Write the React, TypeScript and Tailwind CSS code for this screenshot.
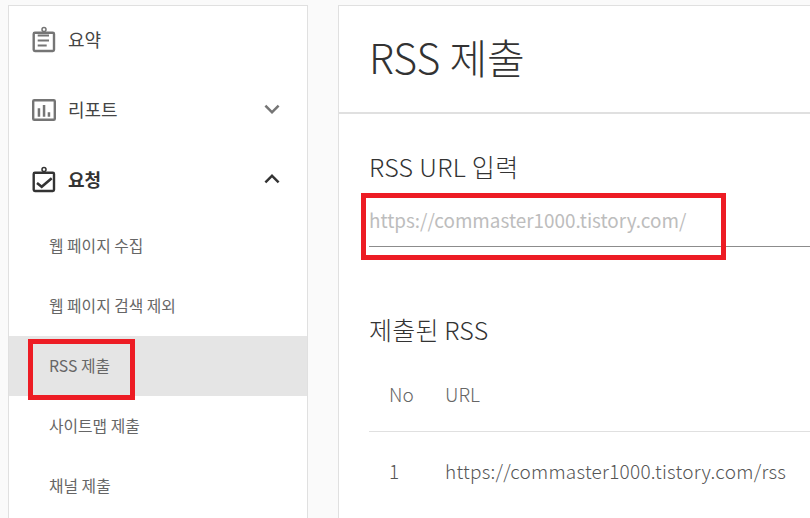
const font = "font-['Noto_Sans_CJK_KR','Noto_Sans',sans-serif]";

function Clip({ children, color }: { children: React.ReactNode; color: string }) {
  return (
    <svg width="30" height="30" viewBox="0 0 30 30" fill="none" stroke={color} className="shrink-0">
      <circle cx="15" cy="5.600" r="2" strokeWidth="1.500" />
      <rect x="4.700" y="8.700" width="20.300" height="18.300" rx="1.200" strokeWidth="2.400" />
      {children}
    </svg>
  );
}

function Row({ icon, label, chevron, bold }: { icon: React.ReactNode; label: string; chevron?: "up" | "down"; bold?: boolean }) {
  return (
    <div className="h-[70px] pb-[4px] flex items-center pl-[20px] pr-[20px]">
      {icon}
      <span className={`ml-[9px] text-[18px] leading-none ${bold ? "font-bold text-[#333]" : "text-[#444]"}`}>{label}</span>
      {chevron && (
        <svg width="30" height="30" viewBox="0 0 24 24" className="ml-auto" fill={chevron === "up" ? "#333" : "#757575"}>
          {chevron === "up" ? (
            <path d="M7.41 15.41 12 10.83l4.59 4.58L18 14l-6-6-6 6z" />
          ) : (
            <path d="M7.41 8.59 12 13.17l4.59-4.58L18 10l-6 6-6-6z" />
          )}
        </svg>
      )}
    </div>
  );
}

function SubItem({ label, active }: { label: string; active?: boolean }) {
  return (
    <div className={`h-[60px] pb-[1px] flex items-center pl-[40px] text-[15.8px] text-[#666] ${active ? "bg-[#e5e5e5]" : ""}`}>
      {label}
    </div>
  );
}

export default function App() {
  return (
    <div className={`relative w-[810px] h-[518px] overflow-hidden bg-[#fafafa] flex items-start pl-[8px] pt-[5px] ${font}`}>
      <aside className="w-[300px] h-[520px] shrink-0 bg-white border border-[#e0e0e0]">
        <Row
          label="요약"
          icon={
            <Clip color="#757575">
              <path d="M8.700 11.500H20M8.700 16.500H20M8.700 21.500H17.700" strokeWidth="2" />
            </Clip>
          }
        />
        <Row
          label="리포트"
          chevron="down"
          icon={
            <svg width="30" height="30" viewBox="0 0 30 30" fill="none" className="shrink-0">
              <rect x="4.200" y="6.200" width="21.600" height="19.600" rx="1" stroke="#757575" strokeWidth="2.400" />
              <path d="M8.700 14.300h2.500v8.400H8.700zM13.800 11h2.500v11.700h-2.500zM18.700 18.300h2.500v4.400h-2.500z" fill="#757575" />
            </svg>
          }
        />
        <Row
          label="요청"
          bold
          chevron="up"
          icon={
            <Clip color="#333">
              <path d="M8 19l4.700 3.700L22.700 14.300" strokeWidth="2.600" />
            </Clip>
          }
        />
        <div>
          <SubItem label="웹 페이지 수집" />
          <SubItem label="웹 페이지 검색 제외" />
          <SubItem label="RSS 제출" active />
          <SubItem label="사이트맵 제출" />
          <SubItem label="채널 제출" />
        </div>
      </aside>

      <main className="ml-[30px] w-[500px] h-[520px] shrink-0 bg-white border-t border-l border-[#e0e0e0]">
        <div className="h-[108px] pb-[6px] border-b-2 border-[#e0e0e0] pl-[30px] flex items-center">
          <h1 className="text-[41px] font-light leading-none text-[#333]">RSS 제출</h1>
        </div>
        <section className="pl-[30px]">
          <h2 className="mt-[36px] text-[25px] tracking-[0.3px] font-light leading-[32px] text-[#333]">RSS URL 입력</h2>
          <div className="mt-[17px] h-[48px] pb-[4px] border-b border-[#8c8c8c] flex items-center text-[18.9px] leading-none text-[#bdbdbd]">
            https://commaster1000.tistory.com/
          </div>
          <h2 className="mt-[66px] text-[25px] tracking-[0.2px] font-light leading-[32px] text-[#333]">제출된 RSS</h2>
          <div className="mt-[12px] h-[75px] border-b border-[#e0e0e0] flex items-center text-[19px] font-light text-[#666]">
            <span className="w-[56px] pl-[20px] box-content">No</span>
            <span>URL</span>
          </div>
          <div className="h-[79px] flex items-center text-[19px] tracking-[0.25px] font-light text-[#555]">
            <span className="w-[56px] pl-[20px] box-content">1</span>
            <span>https://commaster1000.tistory.com/rss</span>
          </div>
        </section>
      </main>

      <div className="absolute left-[28px] top-[339px] w-[107px] h-[61px] border-[5px] border-[#ed1c24]" />
      <div className="absolute left-[361px] top-[193px] w-[365px] h-[67px] border-[5px] border-[#ed1c24]" />
    </div>
  );
}
